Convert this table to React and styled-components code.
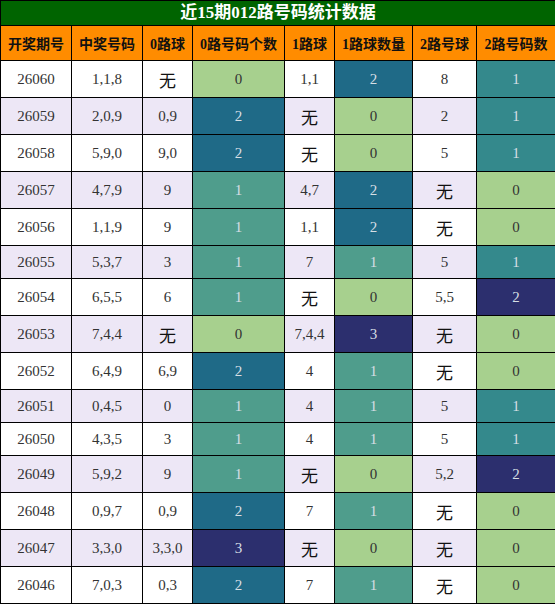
import React from 'react';
import styled, { createGlobalStyle } from 'styled-components';

const Global = createGlobalStyle`
  body {
    margin: 0;
    background: #fff;
    font-family: "Liberation Serif", "Noto Sans CJK SC", serif;
  }
`;

const Table = styled.table`
  width: 555px;
  border-collapse: collapse;
  table-layout: fixed;
`;

const TitleCell = styled.th`
  height: 24px;
  padding: 0;
  background: #006400;
  color: #fff;
  border: 1px solid #000;
  font-weight: bold;
  font-size: 17px;
  line-height: 24px;
  text-align: center;
`;

const HeadCell = styled.th`
  height: 34px;
  padding: 0;
  background: #ff8c00;
  color: #111;
  border: 1px solid #000;
  font-weight: bold;
  font-size: 14px;
  white-space: nowrap;
  text-align: center;
`;

const Row = styled.tr`
  height: ${p => (p.$tall ? 37 : 33)}px;
  background: ${p => (p.$alt ? '#ede7f6' : '#fff')};
`;

const Cell = styled.td`
  padding: 0;
  border: 1px solid #000;
  text-align: center;
  vertical-align: middle;
  font-size: 15px;
  background: ${p => p.$bg || 'transparent'};
  color: ${p => (p.$light ? '#d6dfe4' : '#333')};
`;

const None = styled.span`
  font-family: "Noto Sans CJK SC", sans-serif;
  font-size: 17px;
  color: #111;
`;

const GREEN = '#a7d08e';
const TEAL_GREEN = '#4f9d8c';
const TEAL = '#34898c';
const BLUE = '#1f6a87';
const NAVY = '#2c2f6e';

const scale4 = [GREEN, TEAL_GREEN, BLUE, NAVY];
const scale3 = [GREEN, TEAL, NAVY];

const cols = [71, 71, 50, 92, 50, 78, 64, 79];
const heads = ['开奖期号', '中奖号码', '0路球', '0路号码个数', '1路球', '1路球数量', '2路号球', '2路号码数'];

const rows = [
  ['26060', '1,1,8', '无', 0, '1,1', 2, '8', 1],
  ['26059', '2,0,9', '0,9', 2, '无', 0, '2', 1],
  ['26058', '5,9,0', '9,0', 2, '无', 0, '5', 1],
  ['26057', '4,7,9', '9', 1, '4,7', 2, '无', 0],
  ['26056', '1,1,9', '9', 1, '1,1', 2, '无', 0],
  ['26055', '5,3,7', '3', 1, '7', 1, '5', 1],
  ['26054', '6,5,5', '6', 1, '无', 0, '5,5', 2],
  ['26053', '7,4,4', '无', 0, '7,4,4', 3, '无', 0],
  ['26052', '6,4,9', '6,9', 2, '4', 1, '无', 0],
  ['26051', '0,4,5', '0', 1, '4', 1, '5', 1],
  ['26050', '4,3,5', '3', 1, '4', 1, '5', 1],
  ['26049', '5,9,2', '9', 1, '无', 0, '5,2', 2],
  ['26048', '0,9,7', '0,9', 2, '7', 1, '无', 0],
  ['26047', '3,3,0', '3,3,0', 3, '无', 0, '无', 0],
  ['26046', '7,0,3', '0,3', 2, '7', 1, '无', 0],
];

const Balls = ({ v }) => (v === '无' ? <None>无</None> : v);

const Count = ({ v, scale }) => (
  <Cell $bg={scale[v]} $light={v > 0}>{v}</Cell>
);

export default function App() {
  return (
    <>
      <Global />
      <Table>
        <colgroup>
          {cols.map((w, i) => <col key={i} style={{ width: w }} />)}
        </colgroup>
        <thead>
          <tr>
            <TitleCell colSpan={8}>近15期012路号码统计数据</TitleCell>
          </tr>
          <tr>
            {heads.map(h => <HeadCell key={h}>{h}</HeadCell>)}
          </tr>
        </thead>
        <tbody>
          {rows.map((r, i) => (
            <Row key={r[0]} $alt={i % 2 === 1} $tall={r.includes('无')}>
              <Cell>{r[0]}</Cell>
              <Cell>{r[1]}</Cell>
              <Cell><Balls v={r[2]} /></Cell>
              <Count v={r[3]} scale={scale4} />
              <Cell><Balls v={r[4]} /></Cell>
              <Count v={r[5]} scale={scale4} />
              <Cell><Balls v={r[6]} /></Cell>
              <Count v={r[7]} scale={scale3} />
            </Row>
          ))}
        </tbody>
      </Table>
    </>
  );
}
